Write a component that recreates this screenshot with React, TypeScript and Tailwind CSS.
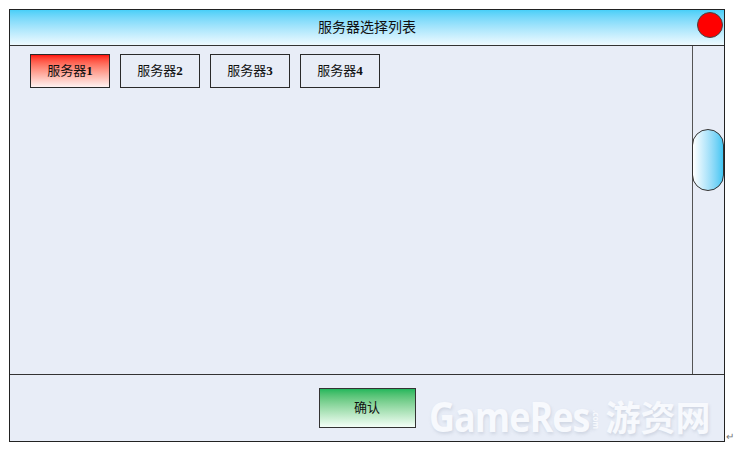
import React from "react";

const serif = { fontFamily: '"Liberation Serif", "Noto Sans CJK SC", serif' };

function ServerButton({ label, num, active }: { label: string; num: string; active?: boolean }) {
  return (
    <div
      className={
        "w-[80px] h-[34px] border border-[#2a2a2a] flex items-center justify-center text-[13px] text-[#111] " +
        (active ? "bg-gradient-to-b from-[#ff0a0a] to-[#fff2f2]" : "bg-[#e8edf7]")
      }
      style={serif}
    >
      <span>{label}</span>
      <b>{num}</b>
    </div>
  );
}

export default function App() {
  return (
    <div className="relative w-[734px] h-[451px] bg-white pt-[9px] pl-[9px]" style={serif}>
      <div className="relative w-[716px] h-[433px] border border-[#222] flex flex-col bg-[#e8edf7]">
        {/* Header */}
        <div className="relative h-[36px] shrink-0 border-b border-[#333] bg-gradient-to-b from-[#48cff8] to-[#eefaff] flex items-center justify-center">
          <span className="text-[14px] text-[#111] leading-none mt-[1px]">服务器选择列表</span>
          <div className="absolute right-[1px] top-[2px] w-[26px] h-[26px] rounded-full bg-[#ff0000] border border-[#444]" />
        </div>
        {/* Body */}
        <div className="h-[329px] shrink-0 border-b border-[#333] flex">
          <div className="flex-1 pt-[8px] pl-[20px] flex items-start gap-[10px]">
            <ServerButton label="服务器" num="1" active />
            <ServerButton label="服务器" num="2" />
            <ServerButton label="服务器" num="3" />
            <ServerButton label="服务器" num="4" />
          </div>
          <div className="w-[32px] shrink-0 border-l border-[#555]">
            <div className="mt-[83px] ml-[-1px] w-[32px] h-[62px] rounded-full border border-[#333] bg-gradient-to-r from-[#ffffff] to-[#3ec6f3]" />
          </div>
        </div>
        {/* Footer */}
        <div className="flex-1 flex justify-center items-start pt-[13px]">
          <div className="w-[97px] h-[40px] border border-[#333] bg-gradient-to-b from-[#1eb75c] to-[#f4fff8] flex items-center justify-center text-[13px] text-[#111]">
            确认
          </div>
        </div>
        {/* Watermark */}
        <div
          className="absolute left-[419px] top-[389px] flex items-center text-[#f7f9fd] select-none"
          style={{ fontFamily: '"Open Sans", "Noto Sans CJK SC", sans-serif', textShadow: "1px 2px 3px rgba(150,160,180,0.3)" }}
        >
          <span className="text-[36px] font-bold tracking-[-1px] leading-none [transform:scaleY(1.12)]">GameRes</span>
          <span className="text-[8px] font-bold leading-none [writing-mode:vertical-rl] ml-[3px] mr-[5px] mt-[6px]">.com</span>
          <span className="text-[35px] font-bold leading-none">游资网</span>
        </div>
      </div>
      <span className="absolute left-[726px] top-[432px] text-[10px] text-[#777] leading-none">↵</span>
    </div>
  );
}
